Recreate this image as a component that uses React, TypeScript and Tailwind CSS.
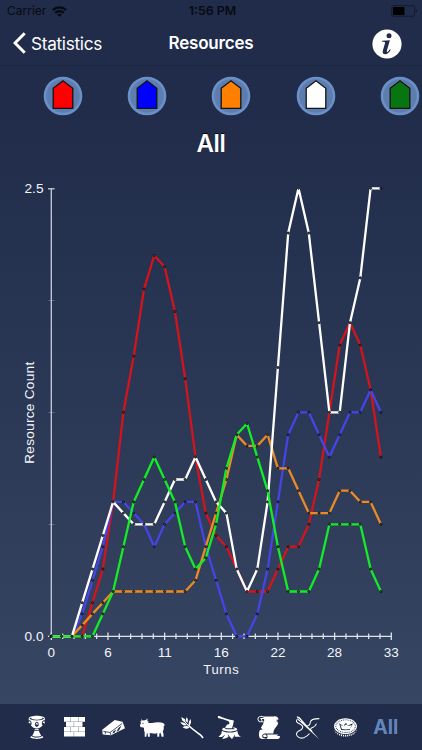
import React from 'react';
import { GiJeweledChalice, GiAxeInStump, GiScrollUnfurled, GiCrownCoin } from 'react-icons/gi';

const series = [
  { color: '#d3141c', values: [0, 0, 0, 0, 3, 6, 12, 20, 25, 31, 34, 33, 29, 23, 16, 11, 9, 8, 6, 4, 4, 4, 6, 8, 8, 10, 14, 20, 26, 28, 26, 22, 16] },
  { color: '#4744e6', values: [0, 0, 0, 2, 5, 8, 12, 12, 11, 10, 8, 10, 11, 12, 12, 8, 5, 2, 0, 0, 2, 6, 12, 18, 20, 20, 18, 16, 18, 20, 20, 22, 20] },
  { color: '#e98a26', values: [0, 0, 0, 1, 2, 3, 4, 4, 4, 4, 4, 4, 4, 4, 5, 8, 11, 14, 18, 17, 17, 18, 15, 15, 13, 11, 11, 11, 13, 13, 12, 12, 10] },
  { color: '#ffffff', values: [0, 0, 0, 3, 6, 9, 12, 11, 10, 10, 10, 12, 14, 14, 16, 14, 12, 11, 6, 4, 6, 12, 24, 36, 40, 36, 28, 20, 20, 28, 32, 40, 40] },
  { color: '#14ec25', values: [0, 0, 0, 0, 0, 2, 4, 8, 12, 14, 16, 14, 12, 8, 6, 7, 10, 15, 18, 19, 16, 13, 8, 4, 4, 4, 6, 10, 10, 10, 10, 6, 4] },
];

const px = (i: number) => 51.3 + i * 10.3;
const py = (v: number) => 466.3 - v * 11.2;

function Chart() {
  return (
    <svg width="422" height="534" viewBox="0 0 422 534" className="block shrink-0" fontFamily="'Liberation Sans', Arial, sans-serif" fill="#f3f5f9">
      <g stroke="#c9ced8" strokeWidth="1.3">
        <path d="M51.3 18.5V466.3" />
        <path d="M48 18.8H54.6" />
        <path d="M48 466.3H391.3" stroke="#dfe3ea" />
        <path d="M48.5 130.5H54.5M48.5 242.5H54.5M48.5 354.5H54.5" strokeWidth="1" opacity=".35" />
        {Array.from({ length: 31 }, (_, i) => {
          const x = 51.3 + (i * 340) / 30;
          const h = i % 5 === 0 ? 3.7 : 2.7;
          return <path key={i} d={`M${x} ${466.3 - h}V${466.3 + h}`} stroke="#dfe3ea" />;
        })}
      </g>
      {series.map((s) => (
        <g key={s.color}>
          <polyline points={s.values.map((v, i) => `${px(i)},${py(v)}`).join(' ')} fill="none" stroke={s.color} strokeWidth="2.3" strokeLinejoin="round" />
          {s.values.map((v, i) => (
            <circle key={i} cx={px(i)} cy={py(v)} r="1.05" fill="#4a5058" stroke="#05080c" strokeWidth=".85" />
          ))}
        </g>
      ))}
      <g fontSize="13" textAnchor="middle">
        {[0, 6, 11, 16, 22, 28, 33].map((n, i) => (
          <text key={n} x={51.3 + (i * 340) / 6} y="487.2" fontSize="13.5">{n}</text>
        ))}
        <text x="221" y="504" textLength="35.5">Turns</text>
        <text transform="translate(34.3 242.8) rotate(-90)" fontSize="13.7" textLength="102">Resource Count</text>
      </g>
      <g fontSize="13.7" textAnchor="end">
        <text x="43.5" y="23">2.5</text>
        <text x="43.5" y="471">0.0</text>
      </g>
    </svg>
  );
}

function Player({ color }: { color: string }) {
  return (
    <svg width="40" height="40" viewBox="0 0 40 40" className="block shrink-0">
      <circle cx="20" cy="20" r="18" fill="#5c7dae" stroke="#6b90c7" strokeWidth="2.6" />
      <path d="M10.2 12.3L20 4.8L29.8 12.3V32.3H10.2Z" fill={color} stroke="#101319" strokeWidth="1.3" />
    </svg>
  );
}

function Bricks() {
  return (
    <svg width="22" height="20" viewBox="0 0 22 20" fill="#fff">
      <path d="M0 0H6V4.7H0ZM6.3 0H14V4.7H6.3ZM14.3 0H21V4.7H14.3ZM2 5H9.8V9.7H2ZM10.1 5H18.5V9.7H10.1ZM0 10H6V14.7H0ZM6.3 10H14V14.7H6.3ZM14.3 10H21V14.7H14.3ZM0 15H9.8V19.6H0ZM10.1 15H21V19.6H10.1Z" />
    </svg>
  );
}

function Ingot() {
  return (
    <svg width="25" height="25" viewBox="0 0 25 25" fill="#fff">
      <path d="M1.2 14.7L13.7 5L21.5 6.7L24 13.2L10 20.3L1.7 19.4Z" />
      <path d="M2.2 16.2L9 17.5L21.2 8.4M9 17.5L10 20" fill="none" stroke="#202c4a" strokeWidth=".8" />
      <path d="M12 16.8L15.4 14.2L13.5 17.7L11.6 18.6ZM17.4 12.9L20.6 10.4L18 15.5L15.5 16.7ZM3.4 17.6L5.2 16.9L4.5 19Z" fill="#202c4a" />
    </svg>
  );
}

function Goat() {
  return (
    <svg width="27" height="25" viewBox="0 0 27 25" fill="#fff">
      <path d="M2.4 3.6Q2 5.2 3.6 5.5L6 5.2Q8 5 7.9 3.2Q9.3 4.7 8.2 6.2L9.7 6.2L9 7.8Q10.5 8.3 13 7.9Q18 6.8 22.2 7.4Q25 7.5 25.8 10L24.7 11.2Q25.3 14 23.8 16.4L24.5 19V21.7H22.7L21.5 17.8L20.4 18.4L20.2 21.7H18.4L18.2 18L16.2 18.8L10.8 18V21.7H9L8.5 18L7.8 18.5L7.4 21.7H5.7V17.5Q4.6 15.4 5 12.8L1.5 12L.9 10.2L2.1 7.9L1 6.5L2.8 6.3Q1.4 5 2.4 3.6Z" />
      <circle cx="4" cy="8.3" r=".6" fill="#202c4a" />
    </svg>
  );
}

function Grain() {
  return (
    <svg width="25" height="25" viewBox="0 0 25 25" fill="#fff">
      <path d="M9 10Q15 15.4 19 18.2Q22 19.4 24 23" fill="none" stroke="white" strokeWidth="1.6" />
      <path d="M2.3 2L6.1 4.2L6.8 8L3.2 5.6ZM7.6 2.3Q10 5 8.2 8Q6 5.5 7.6 2.3ZM11.5 4Q13 8 10.1 10.9Q8.8 7.3 11.5 4ZM1.2 7.5Q5.6 6.8 8 10Q4.2 11.5 1.2 7.5ZM3.5 12.3Q7.3 9.6 10.5 12.2Q7.5 15.3 3.5 12.3Z" />
      <path d="M6 7L11 12.2" stroke="white" />
    </svg>
  );
}

function Needle() {
  return (
    <svg width="25" height="25" viewBox="0 0 25 25" fill="none" stroke="white">
      <path d="M1.6 1.2L4.4 2L24.2 24.3L3.4 5.2Z" fill="white" stroke="none" />
      <path d="M3.2 3.2L6 6.1" stroke="#202c4a" strokeWidth=".7" />
      <path d="M2.5 4Q0 6.6 3.5 8.2Q8.4 10.2 7.6 12.8Q7 14.7 3.8 15.9Q.2 18 2.2 21Q5 24.3 9.5 22.4Q13 20.6 14.5 18.5M12 11Q15.2 10.5 15.2 7.5Q15.5 3.6 24.3 3.6M17.2 16.2Q13.5 14 18 12.2Q20.6 11.2 21.5 8.6" strokeWidth="1.05" />
    </svg>
  );
}

const resources = [
  <GiJeweledChalice size={25} />,
  <Bricks />,
  <Ingot />,
  <Goat />,
  <Grain />,
  <GiAxeInStump size={25} />,
  <GiScrollUnfurled size={25} />,
  <Needle />,
  <GiCrownCoin size={25} />,
];

export default function App() {
  return (
    <div className="flex h-[750px] w-[422px] flex-col overflow-hidden bg-linear-to-b from-[#202c4a] from-15% to-[#374662] to-95% font-['Inter',sans-serif] text-white">
      <div className="grid h-[22px] grid-cols-3 items-center px-[7px] text-[12px] text-[#070a12]">
        <div className="flex items-center gap-[6px]">
          <span className="text-[12px]">Carrier</span>
          <svg width="15" height="11" viewBox="0 0 15 11" fill="none" stroke="currentColor" strokeWidth="2.3">
            <path d="M.8 4C4.5 .4 10.5 .4 14.2 4M3.2 6.9C5.5 4.7 9.5 4.7 11.8 6.9" />
            <path d="M7.5 10.8L5.2 8.7Q7.5 7 9.8 8.7Z" fill="currentColor" stroke="none" />
          </svg>
        </div>
        <span className="pl-[3px] text-center text-[12.4px] font-semibold">1:56 PM</span>
        <svg width="27" height="12" viewBox="0 0 27 12" className="-mr-[3px] justify-self-end">
          <rect x=".7" y=".7" width="23" height="10.5" rx="2" fill="none" stroke="#111a2e" />
          <rect x="2" y="2" width="11.5" height="8" rx=".8" fill="#000" />
          <path d="M25 4Q27 6 25 8Z" fill="#111a2e" />
        </svg>
      </div>
      <div className="grid h-[44px] grid-cols-[1fr_auto_1fr] items-center border-b border-[#1c2742] pr-[20px] pl-[13px]">
        <div className="flex items-center gap-[5px]">
          <svg width="13" height="22" viewBox="0 0 13 22" fill="none" stroke="white" strokeWidth="3">
            <path d="M11.7 1.2L2 11L11.7 20.8" />
          </svg>
          <span className="text-[17.2px] tracking-[-0.3px]">Statistics</span>
        </div>
        <span className="pl-[7px] text-[17px] font-semibold tracking-[-0.2px]">Resources</span>
        <svg width="30" height="30" viewBox="0 0 30 30" className="justify-self-end">
          <circle cx="15" cy="15" r="14.6" fill="white" />
          <circle cx="17" cy="6.7" r="2.5" fill="#202c4a" />
          <path d="M10.3 11.7L17.9 11.2L14.9 21.5Q14.5 23.3 15.5 22.9Q16.8 22.2 18 20.3L18.8 20.8Q16.3 25.2 13.2 25.2Q10 25.2 10.8 21.8L13 14.2Q13.3 12.8 11.7 12.8L10 12.7Z" fill="#202c4a" />
        </svg>
      </div>
      <div className="flex h-[60px] items-center gap-[44.3px] pl-[42.7px]">
        <Player color="#ff0000" />
        <Player color="#0000ff" />
        <Player color="#ff8000" />
        <Player color="#ffffff" />
        <Player color="#087510" />
      </div>
      <div className="flex h-[44px] items-center justify-center pb-[8px] text-[24px] font-semibold tracking-[-0.3px] [text-shadow:0_-1px_0_#000]">All</div>
      <Chart />
      <div className="flex h-[46px] shrink-0 items-center bg-[#202c4a] pl-[17px]">
        {resources.map((icon, i) => (
          <div key={i} className="flex w-[38.7px] shrink-0 justify-center">{icon}</div>
        ))}
        <span className="ml-[8px] pt-[2px] text-[19.5px] font-bold text-[#6387bd]">All</span>
      </div>
    </div>
  );
}
